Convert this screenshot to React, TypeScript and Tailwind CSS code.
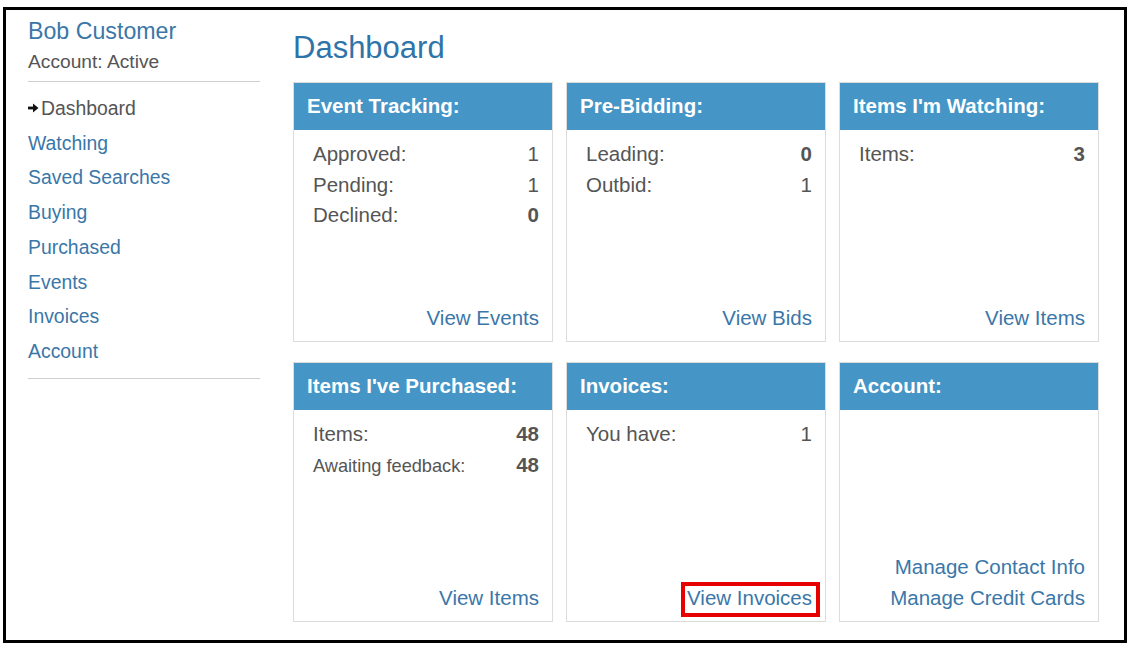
import React from "react";

type Row = { label: string; value: string; bold?: boolean; small?: boolean };
type Card = { title: string; rows: Row[]; links: string[]; boxed?: boolean };

const cards: Card[] = [
  {
    title: "Event Tracking:",
    rows: [
      { label: "Approved:", value: "1" },
      { label: "Pending:", value: "1" },
      { label: "Declined:", value: "0", bold: true },
    ],
    links: ["View Events"],
  },
  {
    title: "Pre-Bidding:",
    rows: [
      { label: "Leading:", value: "0", bold: true },
      { label: "Outbid:", value: "1" },
    ],
    links: ["View Bids"],
  },
  {
    title: "Items I'm Watching:",
    rows: [{ label: "Items:", value: "3", bold: true }],
    links: ["View Items"],
  },
  {
    title: "Items I've Purchased:",
    rows: [
      { label: "Items:", value: "48", bold: true },
      { label: "Awaiting feedback:", value: "48", bold: true, small: true },
    ],
    links: ["View Items"],
  },
  {
    title: "Invoices:",
    rows: [{ label: "You have:", value: "1" }],
    links: ["View Invoices"],
    boxed: true,
  },
  {
    title: "Account:",
    rows: [],
    links: ["Manage Contact Info", "Manage Credit Cards"],
  },
];

const nav = ["Watching", "Saved Searches", "Buying", "Purchased", "Events", "Invoices", "Account"];

function Arrow() {
  return (
    <svg width="11" height="10" viewBox="0 0 11 10" className="mr-[2px]">
      <rect x="0" y="3.6" width="6" height="2.8" fill="#111" />
      <polygon points="5,0.5 10.5,5 5,9.5" fill="#111" />
    </svg>
  );
}

function DashCard({ card }: { card: Card }) {
  return (
    <div className="w-[260px] h-[260px] border border-[#dcdcdc] flex flex-col">
      <div className="h-[47px] bg-[#4595c6] flex items-center px-[13px] text-white font-bold text-[20.5px]">
        {card.title}
      </div>
      <div className="flex-1 flex flex-col pt-[9px] pb-[8px] pl-[19px] pr-[13px]">
        <div className="flex-1">
          {card.rows.map((r) => (
            <div key={r.label} className="flex justify-between items-baseline leading-[30.5px] text-[#555]">
              <span className={r.small ? "text-[18.2px]" : "text-[20.5px]"}>{r.label}</span>
              <span className={`text-[20.5px] ${r.bold ? "font-bold" : ""}`}>{r.value}</span>
            </div>
          ))}
        </div>
        {card.links.map((l) => (
          <div key={l} className="text-right leading-[30.5px] text-[20.5px]">
            <a className="relative text-[#3a77a8]">
              {l}
              {card.boxed && (
                <span className="absolute -left-[6px] -right-[8px] -top-[4px] -bottom-[8px] border-4 border-[#e60000]" />
              )}
            </a>
          </div>
        ))}
      </div>
    </div>
  );
}

export default function App() {
  return (
    <div className="w-[1134px] h-[651px] bg-white pt-[7px] pl-[3px] font-['Liberation_Sans',Arial,sans-serif]">
      <div className="w-[1124px] h-[636px] border-[3px] border-black flex">
        {/* Sidebar */}
        <aside className="ml-[22px] w-[232px] pt-[7px]">
          <div className="text-[23.2px] leading-[28px] text-[#3a77a8]">Bob Customer</div>
          <div className="mt-[5px] text-[19.2px] leading-[24px] text-[#555]">Account: Active</div>
          <div className="mt-[7px] border-t border-[#cfcfcf]" />
          <ul className="mt-[9px] text-[19.4px]">
            <li className="leading-[34.7px] flex items-center text-[#555]">
              <Arrow />
              Dashboard
            </li>
            {nav.map((n) => (
              <li key={n} className="leading-[34.7px] text-[#3a77a8]">
                {n}
              </li>
            ))}
          </ul>
          <div className="mt-[9px] border-t border-[#cfcfcf]" />
        </aside>

        {/* Main */}
        <main className="ml-[33px] pt-[20px]">
          <h1 className="text-[31px] leading-[36px] text-[#2f74a8]">Dashboard</h1>
          <div className="mt-[16px] grid grid-cols-[260px_260px_260px] gap-x-[13px] gap-y-[20px]">
            {cards.map((c) => (
              <DashCard key={c.title} card={c} />
            ))}
          </div>
        </main>
      </div>
    </div>
  );
}
